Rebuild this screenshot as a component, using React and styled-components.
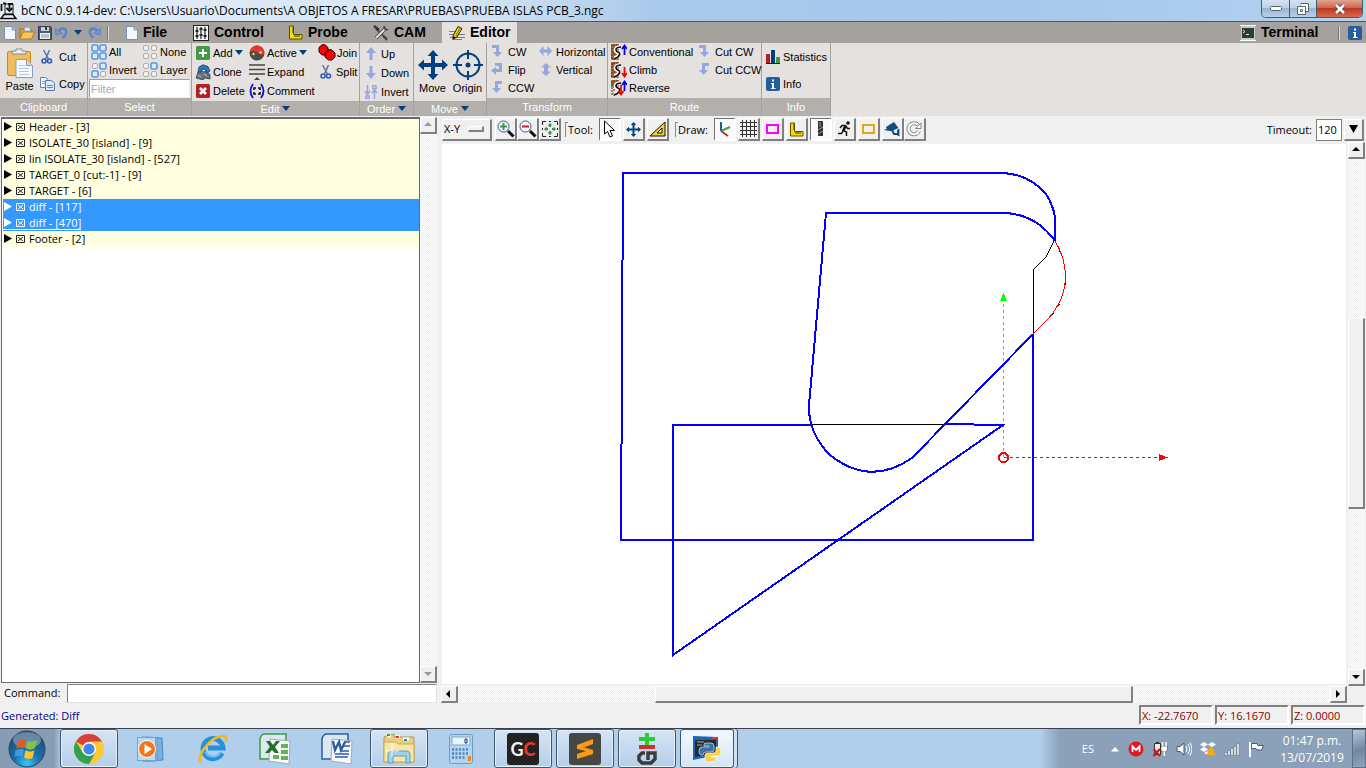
import React from "react";
import styled, { createGlobalStyle, css } from "styled-components";

const GlobalStyle = createGlobalStyle`
  *, *::before, *::after { box-sizing: border-box; }
  body { margin: 0; overflow: hidden; }
  button, input { font: inherit; color: inherit; margin: 0; }
  button { padding: 0; border: 0; background: none; cursor: pointer; }
  ul { list-style: none; margin: 0; padding: 0; }
  svg { display: block; flex: none; }
`;

const uiFont = '"Open Sans", "Noto Sans", sans-serif';
const ribbonFont = '"Liberation Sans", Arial, sans-serif';
const navy = "#00407f";
const lilac = "#97a6e0";

/* ---------- icons ---------- */

const Glyph = ({ w = 16, h = w, box, children }) => (
  <svg width={w} height={h} viewBox={box || `0 0 ${w} ${h}`} fill="none" aria-hidden="true">
    {children}
  </svg>
);

const Caret = () => <Glyph w={8} h={5}><path d="M0 0H8L4 5Z" fill={navy} /></Glyph>;

const PageIcon = () => (
  <Glyph w={12} h={14}>
    <path d="M.5.5H8L11.500 4V13.500H.5Z" fill="#f4f8ff" stroke="#7891b8" />
    <path d="M8 .5V4H11.500" fill="#b8cbe8" stroke="#7891b8" />
  </Glyph>
);
const OpenIcon = () => (
  <Glyph w={16} h={14}>
    <path d="M1 12V3H6L7 4H13V7" fill="#e0a030" stroke="#a87020" />
    <path d="M5 2L10 1L12 5H6Z" fill="#dfe9f8" stroke="#8898b8" strokeWidth=".6" />
    <path d="M1 13L4 6H15.500L12.500 13Z" fill="#f7c560" stroke="#b87c20" />
  </Glyph>
);
const SaveIcon = () => (
  <Glyph w={14}>
    <path d="M.5.5H12.500L13.500 2V13.500H.5Z" fill="#4c5a70" stroke="#333d50" />
    <rect x="3" y="1" width="8" height="4" fill="#c8d0dc" /><rect x="7" y="1" width="2" height="3" fill="#333d50" />
    <rect x="2" y="7" width="10" height="6" fill="#f0f2f6" /><path d="M3 9H11M3 11H11" stroke="#8896a8" />
  </Glyph>
);
const UndoIcon = ({ flip }) => (
  <Glyph w={13} h={13}>
    <g transform={flip ? "translate(13 0) scale(-1 1)" : undefined}>
      <path d="M4 5C6 1 12 2 11 7C10.500 9.500 9 11 7.500 12" stroke="#5a85cc" strokeWidth="2.600" />
      <path d="M0 2L1 9L7.500 7.500Z" fill="#6c96dc" stroke="#4a70b4" strokeWidth=".5" />
    </g>
  </Glyph>
);
const ControlIcon = () => (
  <Glyph w={16}>
    <rect x=".5" y=".5" width="15" height="15" fill="#f4f4f4" stroke="#222" />
    <path d="M4 2V14M8 2V14M12 2V14" stroke="#222" strokeWidth="1.200" />
    <path d="M2.500 6H5.500M6.500 10H9.500M10.500 5H13.500M2.500 11H5.500M6.500 4H9.500M10.500 11H13.500" stroke="#222" strokeWidth="1.800" />
  </Glyph>
);
const RulerIcon = () => (
  <Glyph w={15}>
    <path d="M1.500 1H5.500V9.500H14V14H1.500Z" fill="#f5dd00" stroke="#5c5200" />
    <path d="M4 3H5.500M4 5H5.500M4 7H5.500M7 10V12M9 10V12M11 10V12" stroke="#333" />
  </Glyph>
);
const ToolsIcon = () => (
  <Glyph w={16}>
    <path d="M3 4L14 14" stroke="#555" strokeWidth="2" /><path d="M1 1L6 5" stroke="#333" strokeWidth="2.600" />
    <path d="M13 3L3 13" stroke="#333" strokeWidth="3.400" /><path d="M13 3L3 13" stroke="#e4e4e4" strokeWidth="2" />
    <path d="M11 1L12 4L15 5M10 11L14 15" stroke="#444" strokeWidth="1.800" />
  </Glyph>
);
const PencilIcon = () => (
  <Glyph w={16}>
    <path d="M0 6.500H8M0 9.500H16M1 12.500H16M3 14.500H13" stroke="#777d90" />
    <path d="M4 11L9 1.500L13 3.500L8 12L4 14Z" fill="#f5d400" stroke="#222" />
    <path d="M4 11V14L7 12.500Z" fill="#111" /><path d="M11 3L7 11" stroke="#8a7200" />
  </Glyph>
);
const TerminalIcon = () => (
  <Glyph w={16}>
    <path d="M0 .5H16M0 15.500H16" stroke="#fff" /><rect x="1" y="1" width="14" height="14" fill="#c8ccc8" />
    <rect x="2" y="3" width="12" height="10" fill="#303a36" /><path d="M3 5L5 6.500L3 8M6 9.500H9" stroke="#e8e8e8" />
  </Glyph>
);
const InfoIcon = () => (
  <Glyph w={14}>
    <rect width="14" height="14" rx="2" fill="#245e9e" />
    <path d="M6 2.500H8V4.500H6ZM5 6H8V11H9.500V12H5V11H6V7H5Z" fill="#fff" />
  </Glyph>
);
const PasteIcon = () => (
  <Glyph w={26} h={30}>
    <rect x=".5" y="3.500" width="23" height="24" rx="1.500" fill="#f1bc5c" stroke="#c48a30" />
    <path d="M5 6V3H9V1H15V3H19V6Z" fill="#e8ebf0" stroke="#858c98" />
    <path d="M9 11.500H19.500L25.500 17.500V29.500H9Z" fill="#f6f9ff" stroke="#8c9cb8" />
    <path d="M19.500 11.500V17.500H25.500" fill="#ccd8ec" stroke="#8c9cb8" />
    <path d="M12 17.500H18M12 20.500H22M12 23.500H22M12 26.500H22" stroke="#b8c4dc" />
  </Glyph>
);
const CutIcon = () => (
  <Glyph w={12} h={14}>
    <path d="M2.500 0L7.500 9M8.500 0L4.500 9" stroke="#5876a8" strokeWidth="1.500" />
    <circle cx="3" cy="11" r="2" stroke="#3058c0" strokeWidth="1.600" /><circle cx="8.500" cy="11" r="2" stroke="#3058c0" strokeWidth="1.600" />
  </Glyph>
);
const CopyIcon = () => (
  <Glyph w={16} h={14}>
    <path d="M1.500.5H6.500L9.500 3V10.500H1.500Z" fill="#edf3ff" stroke="#6484b8" /><path d="M3 4.500H7M3 6.500H7" stroke="#86a2d0" />
    <path d="M6.500 3.500H12.500L15.500 6V13.500H6.500Z" fill="#dce8fc" stroke="#5878b0" /><path d="M8 8.500H14M8 10.500H14" stroke="#5e88c8" />
  </Glyph>
);
const SelectIcon = ({ on }) => (
  <Glyph w={16}>
    {[[1, 1], [9, 1], [1, 9], [9, 9]].map(([x, y], i) => (
      <rect key={i} x={x + (on[i] ? 0 : .5)} y={y + (on[i] ? 0 : .5)} width={on[i] ? 6 : 5} height={on[i] ? 6 : 5} rx="1.500"
        fill={on[i] ? "#dceafc" : "#f4f2f0"} stroke={on[i] ? "#5599e6" : "#b0acaa"} strokeWidth={on[i] ? 1.6 : 1} />
    ))}
  </Glyph>
);
const AddIcon = () => <Glyph w={14}><rect width="14" height="14" rx="1.500" fill="#459a48" /><path d="M7 3V11M3 7H11" stroke="#fff" strokeWidth="2" /></Glyph>;
const DeleteIcon = () => <Glyph w={14}><rect width="14" height="14" rx="1.500" fill="#b52025" /><path d="M4 4L10 10M10 4L4 10" stroke="#fff" strokeWidth="2.600" /></Glyph>;
const CloneIcon = () => (
  <Glyph w={16}>
    <path d="M1 14L3 8L6 6L9 8L12 7L15 11V15L10 14L8 16Z" fill="#69727c" stroke="#3a4048" strokeWidth=".8" />
    <path d="M3 8L4 3L8 .8L13 2.500L15 7L12 9L10 5.500L7 5L6 8Z" fill="#2878c4" stroke="#183c60" strokeWidth=".8" />
    <path d="M3 11L6 13M9 10L12 12" stroke="#b4bcc6" />
  </Glyph>
);
const ActiveIcon = () => (
  <Glyph w={16}>
    <circle cx="8" cy="8" r="7.500" fill="#4c4c4c" />
    <path d="M.5 8A7.500 7.500 0 0 1 15.500 8C13 12 10 8 8 7S2 5 .5 8" fill="#e03838" />
    <circle cx="4.500" cy="9" r="1.200" fill="#f3dc45" /><circle cx="11.500" cy="7.500" r="1.200" fill="#f3dc45" />
  </Glyph>
);
const ExpandIcon = () => <Glyph w={16}><path d="M0 1H16M0 5.500H16M0 10H16" stroke="#444" strokeWidth="1.500" /><path d="M5 16L8 13L11 16Z" fill="#444" /></Glyph>;
const CommentIcon = () => (
  <Glyph w={16}>
    <path d="M4 1Q-1 8 4 15M12 1Q17 8 12 15" stroke="#1010cc" strokeWidth="1.800" />
    <path d="M5 7V5H7M9 5H11V7M11 9V11H9M7 11H5V9" stroke="#111" strokeWidth="1.600" />
  </Glyph>
);
const JoinIcon = () => (
  <Glyph w={18} h={17}>
    <path d="M4 .8H7L10 3.500V8L7 11H4L1 8V3.500Z" fill="#f00" stroke="#200" />
    <path d="M10 5.800H13.500L17 9V13L14 16H10.500L7 13V9Z" fill="#f00" stroke="#200" /><path d="M7 9L10 6.500V8L7 11Z" stroke="#500" />
  </Glyph>
);
const arrowPaths = {
  up: <path d="M5.500 13V6H2L7 0L12 6H8.500V13Z" fill={lilac} />,
  down: <path d="M5.500 0V7H2L7 13L12 7H8.500V0Z" fill={lilac} />,
  invert: <path d="M3.500 0V8M1 6L3.500 9.500L6 6M10.500 14V6M8 8L10.500 5L13 8M9 .8H12V3.800H9ZM2 11H5V13.500H2Z" stroke={lilac} strokeWidth="1.500" />,
  cw: <path d="M1 0H8V7H11L6.500 12L2 7H5V3H1Z" fill={lilac} />,
  ccw: <path d="M11 0H4V7H1L5.500 12L10 7H7V3H11Z" fill={lilac} />,
  flip: <path d="M4 0H11V9H5V12L0 7.500L5 4V6H8V3H4Z" fill={lilac} />,
  horizontal: <path d="M0 6L4.500 1V4.500H8.500V1L13 6L8.500 11V7.500H4.500V11Z" fill={lilac} />,
  vertical: <path d="M7 0L12 4.500H9V8.500H12L7 13L2 8.500H5V4.500H2Z" fill={lilac} />,
};
const Arrow = ({ kind }) => <Glyph w={14}>{arrowPaths[kind]}</Glyph>;
const MoveIcon = ({ size = 30 }) => (
  <Glyph w={size} box="0 0 30 30">
    <path d="M15 0L20.500 6H17V13H24V9.500L30 15L24 20.500V17H17V24H20.500L15 30L9.500 24H13V17H6V20.500L0 15L6 9.500V13H13V6H9.500Z" fill={navy} />
  </Glyph>
);
const OriginIcon = () => (
  <Glyph w={30}>
    <circle cx="15" cy="15" r="11.500" stroke={navy} strokeWidth="2" /><circle cx="15" cy="15" r="2.500" fill={navy} />
    <path d="M15 0V9M15 21V30M0 15H9M21 15H30" stroke={navy} strokeWidth="2" />
  </Glyph>
);
const RouteIcon = ({ kind }) => (
  <Glyph w={16}>
    <rect x="0" y="0" width="8" height={kind === "reverse" ? 7 : 16} fill="#b06c3c" />
    <path d="M1 1V15M3 0V16M6 0V5" stroke="#4c2810" strokeDasharray="2 1" />
    <path d="M9 3C4 3 3 7 6 8S9 13 3 14" stroke="#fff" strokeWidth="3.500" />
    <path d="M10 3C4 3 4 7 7 8S9 13 3 15" stroke="#111" strokeWidth="1.700" />
    {kind === "climb"
      ? <path d="M13.500 5V14M11 11L13.500 14.500L16 11" stroke="#f00000" strokeWidth="1.700" />
      : <path d="M13.500 11V2M11 5L13.500 1.500L16 5" stroke="#0000e8" strokeWidth="1.700" />}
    {kind === "reverse" && <path d="M10 5V14M7.500 11L10 14.500L12.500 11" stroke="#f00000" strokeWidth="1.700" />}
  </Glyph>
);
const StatisticsIcon = () => (
  <Glyph w={14}><path d="M0 4H4V13H0Z" fill="#b52025" /><path d="M5 0H9V13H5Z" fill={navy} /><path d="M10 7H14V13H10Z" fill="#459a48" /><path d="M0 13.500H14" stroke="#222" /></Glyph>
);
const ZoomIcon = ({ minus }) => (
  <Glyph w={18}>
    <path d="M11 11L16.500 16.500" stroke="#111" strokeWidth="3" /><circle cx="6.500" cy="6.500" r="5.500" fill="#f6f8fa" stroke="#2c5c8c" />
    <path d={minus ? "M3 6.500H10" : "M3 6.500H10M6.500 3V10"} stroke={minus ? "#c02028" : "#3c9444"} strokeWidth="2" />
  </Glyph>
);
const FitIcon = () => (
  <Glyph w={18}>
    <path d="M1.500 5V1.500H5M8 1.500H10M13 1.500H16.500V5M16.500 8V10M16.500 13V16.500H13M10 16.500H8M5 16.500H1.500V13M1.500 10V8" stroke="#222" />
    <path d="M9 3L11.500 5.500H10V7H8V5.500H6.500ZM9 15L6.500 12.500H8V11H10V12.500H11.500ZM3 9L5.500 6.500V8H7V10H5.500V11.500ZM15 9L12.500 11.500V10H11V8H12.500V6.500Z" fill="#3c9444" />
  </Glyph>
);
const PointerIcon = () => <Glyph w={13} h={18}><path d="M1.500 1V14L4.500 11.500L7 17L9.500 16L7 10.500H11.500Z" fill="#fff" stroke="#000" /></Glyph>;
const TriangleIcon = () => <Glyph w={17} h={16}><path d="M1 15H16V1Z" fill="#f6d02c" stroke="#111" /><path d="M8 12H13V7Z" fill="#f0f0f0" stroke="#111" /></Glyph>;
const AxesIcon = () => <Glyph w={16}><path d="M5 1V10" stroke="#205c9c" strokeWidth="2" /><path d="M5 10L14 6" stroke="#449c4c" strokeWidth="2" /><path d="M5 10L12 15" stroke="#b83040" strokeWidth="2" /></Glyph>;
const GridIcon = () => <Glyph w={17} h={18}><path d="M0 2.500H17M0 6.500H17M0 10.500H17M0 14.500H17M2.500 0V17M6.500 0V17M10.500 0V17M14.500 0V17" stroke="#333" shapeRendering="crispEdges" /></Glyph>;
const FrameIcon = ({ color }) => <Glyph w={13} h={12}><rect x="1" y="2" width="11" height="8" fill="#f0f0f0" stroke={color} strokeWidth="2" /></Glyph>;
const DrillIcon = () => <Glyph w={5} h={16}><rect width="5" height="15" fill="#333" /><path d="M0 9L5 6M0 13L5 10M2 1V6" stroke="#999" /></Glyph>;
const RunIcon = () => <Glyph w={15} h={16}><circle cx="11" cy="2" r="1.800" fill="#111" /><path d="M3 7L5 4.500H8.500L10.500 7.500H13M8.500 5L6 9.500L9.500 11V15M6.500 9L4.500 12.500H1" stroke="#111" strokeWidth="1.500" /><path d="M8.500 4.500L6.500 9.500" stroke="#111" strokeWidth="2.500" /></Glyph>;
const CameraIcon = () => <Glyph w={16} h={16}><path d="M2 6L10 1L14.500 7L10 9L9 10.500L0 9L3 7.500Z" fill="#0e4b88" /><path d="M8 9L10 13H14V9M14.500 8V15" stroke="#0e4b88" strokeWidth="1.800" /></Glyph>;
const ReloadIcon = () => <Glyph w={16}><path d="M13 10A5.500 5.500 0 1 1 12 4" stroke="#888" strokeWidth="4" /><path d="M9.500 7.500H15V2Z" fill="#fafafa" stroke="#888" /><path d="M13 10A5.500 5.500 0 1 1 12 4" stroke="#fafafa" strokeWidth="2.200" /></Glyph>;
const AppIcon = () => (
  <Glyph w={18} h={20}>
    <path d="M5 4H13V14H5Z" fill="#e8eef5" stroke="#111" /><path d="M4 14.500H13L16 18.500H1Z" fill="#e8eef5" stroke="#111" strokeWidth="1.500" />
    <path d="M1.500 4V11M3 3.500H6M8 4H12V5M9.500 4V9M6.500 8L9.500 11L12.500 8" stroke="#111" strokeWidth="1.800" />
  </Glyph>
);

/* ---------- frame ---------- */

const Screen = styled.div`
  display: flex;
  flex-direction: column;
  height: 100vh;
  background: #f0f0f0;
  font: 11px/16px ${uiFont};
  color: #000;
`;

const TitleBar = styled.header`
  display: flex;
  align-items: flex-start;
  height: 22px;
  flex: none;
  border-bottom: 1px solid #47586c;
  background: linear-gradient(to right, #e4eef9 0%, #d4e3f4 35%, #a9c9ea 48%, #a6c8ea 75%, #b4d2f0 100%);
`;
const TitleText = styled.h1`
  flex: 1;
  margin: 0;
  padding-left: 3px;
  font: 12px/21px ${uiFont};
  white-space: nowrap;
`;
const WindowControls = styled.div`
  display: flex;
  margin-right: 3px;
  border: 1px solid #4a5a6e;
  border-top: 0;
  border-radius: 0 0 5px 5px;
  overflow: hidden;
`;
const WindowButton = styled.button`
  display: grid;
  place-items: center;
  width: ${(p) => (p.$close ? 46 : 27)}px;
  height: 17px;
  background: ${(p) => (p.$close
    ? "linear-gradient(#e0a493, #d0664f 45%, #bd3a20 50%, #d8694a)"
    : "linear-gradient(#d4e2f1, #bfd2e6 45%, #9db6d0 50%, #b8cfe6)")};
  & + & { border-left: 1px solid #4a5a6e; }
`;

const TabBar = styled.nav`
  display: flex;
  align-items: stretch;
  height: 21px;
  flex: none;
  background: #a5a19d;
  font: bold 14px/21px ${ribbonFont};
`;
const QuickTools = styled.div`
  display: flex;
  align-items: center;
  gap: 3px;
  width: 119px;
  padding-left: 4px;
`;
const HistoryButton = styled.button`padding: 0 3px;`;
const Divider = styled.span`
  width: 2px;
  height: 14px;
  margin: 4px ${(p) => p.$gap}px;
  border-left: 1px solid #777;
  border-right: 1px solid #ddd;
`;
const Tab = styled.button`
  display: flex;
  align-items: center;
  gap: 5px;
  padding: 0 7px;
  width: ${(p) => p.$width}px;
  background: ${(p) => (p.$active ? "#e5e1de" : "transparent")};
`;
const Spacer = styled.span`flex: 1;`;
const QuickInfo = styled.button`padding: 0 4px 0 0;`;

/* ---------- ribbon ---------- */

const Ribbon = styled.section`
  display: flex;
  height: 73px;
  flex: none;
  background: #e5e1de;
  font: 11px/14px ${ribbonFont};
`;
const Group = styled.div`
  display: flex;
  flex-direction: column;
  width: ${(p) => p.$width}px;
  border-right: 1px solid #a5a19d;
`;
const GroupBody = styled.div`
  flex: 1;
  min-height: 0;
  display: grid;
  grid-template-columns: ${(p) => p.$cols};
  grid-auto-rows: ${(p) => p.$row || 18}px;
  align-content: start;
  padding-left: ${(p) => p.$pad || 3}px;
  padding-top: ${(p) => p.$top || 0}px;
`;
const GroupLabel = styled.div`
  display: flex;
  align-items: center;
  justify-content: center;
  gap: 3px;
  height: ${(p) => (p.$menu ? 15 : 18)}px;
  background: #b3afab;
  color: #fff;
`;
const Tool = styled.button`
  display: flex;
  align-items: center;
  gap: ${(p) => p.$gap || 3}px;
  white-space: nowrap;
  text-align: left;
`;
const BigTool = styled.button`
  display: flex;
  flex-direction: column;
  align-items: center;
  justify-content: flex-start;
  gap: 1px;
  padding-top: 5px;
  grid-row: span 2;
`;
const FilterInput = styled.input`
  grid-column: 1 / -1;
  height: 19px;
  margin: 0 1px 0 -2px;
  padding: 0 1px;
  min-width: 0;
  border: 1px solid #a0a0a0;
  border-right-color: #eee;
  border-bottom-color: #eee;
  background: #fff;
  &::placeholder { color: #aaa; opacity: 1; }
`;
const IconSlot = styled.span`
  display: grid;
  place-items: center;
  width: ${(p) => p.$w || 16}px;
  flex: none;
`;

const ToolItem = ({ icon, label, menu, slot, gap }) => (
  <Tool $gap={gap}><IconSlot $w={slot}>{icon}</IconSlot>{label}{menu && <Caret />}</Tool>
);
const RibbonGroup = ({ label, width, menu, children, ...body }) => (
  <Group $width={width}>
    <GroupBody {...body}>{children}</GroupBody>
    <GroupLabel $menu={menu}>{label}{menu && <Caret />}</GroupLabel>
  </Group>
);

/* ---------- workspace ---------- */

const Workspace = styled.main`
  display: flex;
  flex: 1;
  min-height: 0;
`;
const SidePane = styled.aside`
  display: flex;
  flex-direction: column;
  width: 437px;
  margin-right: 4px;
  flex: none;
  padding: 1px 0 0 1px;
`;
const ListFrame = styled.div`
  display: flex;
  flex: 1;
  min-height: 0;
`;
const BlockList = styled.ul`
  flex: 1;
  padding-left: 1px;
  background: #fff;
  border: 1px solid #696969;
  border-top-width: 2px;
`;
const Block = styled.li`
  display: flex;
  align-items: center;
  height: 16px;
  white-space: pre;
  background: ${(p) => (p.$selected ? "#3399ff" : "#ffffe0")};
  color: ${(p) => (p.$selected ? "#fff" : "#000")};
`;
const BlockLine = styled.span`
  display: flex;
  align-items: center;
  height: 14px;
  gap: 4px;
  padding-left: 1px;
  border-bottom: 1px solid ${(p) => (p.$focus ? "#fff" : "transparent")};
`;
const CommandRow = styled.label`
  display: flex;
  align-items: center;
  height: 20px;
  padding-left: 3px;
  gap: 7px;
`;
const CommandInput = styled.input`
  flex: 1;
  height: 19px;
  border: 1px solid #828282;
  border-right-color: #e3e3e3;
  border-bottom-color: #e3e3e3;
  background: #fff;
`;

const raised = css`
  background: #f0f0f0;
  border: 1px solid #fff;
  border-right: 2px solid #808080;
  border-bottom: 2px solid #808080;
`;
const Scrollbar = styled.div`
  display: flex;
  flex-direction: ${(p) => (p.$horizontal ? "row" : "column")};
  ${(p) => (p.$horizontal ? "height: 17px;" : "width: 17px;")}
  background: repeating-conic-gradient(#fff 0 25%, #ececec 0 50%) 0 0 / 2px 2px;
`;
const ScrollButton = styled.button`
  display: grid;
  place-items: center;
  width: 17px;
  height: 17px;
  flex: none;
  ${raised}
`;
const Track = styled.span`flex: ${(p) => p.$share};`;
const Thumb = styled.span`
  flex: ${(p) => p.$share};
  ${raised}
`;

const CanvasPane = styled.section`
  display: flex;
  flex-direction: column;
  flex: 1;
  min-width: 0;
`;
const CanvasTools = styled.div`
  display: flex;
  align-items: center;
  height: 26px;
  flex: none;
  padding: 1px 2px 0 1px;
`;
const PlaneButton = styled.button`
  display: flex;
  align-items: center;
  justify-content: space-between;
  width: 50px;
  height: 22px;
  margin-right: 3px;
  padding: 0 6px 0 1px;
  ${raised}
`;
const PlaneMark = styled.span`
  width: 16px;
  height: 6px;
  ${raised}
`;
const CanvasButton = styled.button`
  display: grid;
  place-items: center;
  width: 22px;
  height: 23px;
  margin-right: ${(p) => (p.$tight ? 0 : 2)}px;
  ${raised}
  ${(p) => p.$on && css`
    background: #fafafa;
    border-color: #707070 #fff #fff #707070;
  `}
`;
const ToolCaption = styled.span`
  display: flex;
  align-items: center;
  margin: 0 6px 0 4px;
  &::before {
    content: "";
    width: 3px;
    height: 15px;
    border: 1px solid #888;
    border-right: 0;
    border-bottom: 0;
  }
`;
const TimeoutField = styled.label`
  display: flex;
  align-items: center;
  gap: 4px;
`;
const TimeoutInput = styled.input`
  width: 26px;
  height: 22px;
  padding: 0 1px;
  border: 1px solid #808080;
  background: #fff;
`;
const DropButton = styled.button`
  display: grid;
  place-items: center;
  width: 20px;
  height: 22px;
  margin-left: 2px;
  ${raised}
`;
const CanvasBody = styled.div`
  display: flex;
  flex: 1;
  min-height: 0;
`;
const Sheet = styled.div`
  display: flex;
  flex: 1;
  min-width: 0;
  padding: 2px 0 2px 1px;
`;
const Drawing = styled.svg`
  flex: 1;
  min-width: 0;
  height: 100%;
  background: #fff;
`;
const VerticalGutter = styled.div`
  display: flex;
  padding: 0 1px 0 2px;
`;
const HorizontalGutter = styled.div`
  padding-right: 19px;
`;

/* ---------- status bar ---------- */

const StatusBar = styled.footer`
  display: flex;
  align-items: center;
  gap: 2px;
  height: 25px;
  flex: none;
  padding: 0 1px;
  color: #00008b;
`;
const Coordinate = styled.output`
  width: 74px;
  height: 20px;
  margin-bottom: 2px;
  padding: 0 1px;
  line-height: 17px;
  border: 2px solid;
  border-color: #808080 #fff #fff #808080;
  color: #8b0000;
`;

/* ---------- taskbar ---------- */

const Taskbar = styled.nav`
  display: flex;
  align-items: stretch;
  height: 40px;
  flex: none;
  border-top: 1px solid #354050;
  background: linear-gradient(to right, #879db5 0, #879db5 54px, #b1ceeb 62px, #b1ceeb calc(100% - 326px), #8aa1b9 calc(100% - 306px));
`;
const StartButton = styled.button`
  display: grid;
  place-items: center;
  width: 60px;
  padding-right: 6px;
`;
const TaskButton = styled.button`
  display: grid;
  place-items: center;
  width: ${(p) => (p.$front ? 54 : 58)}px;
  margin-right: 4px;
  border: 1px solid transparent;
  border-radius: 3px;
  ${(p) => p.$open && css`
    border-color: #40566e;
    box-shadow: inset 0 0 0 1px #e6f1fc;
    background: linear-gradient(${p.$front ? "#f4f9fe, #d4e5f6" : "#d5e4f4, #b4cfea"});
  `}
  ${(p) => p.$front && css`
    box-shadow: inset 0 0 0 1px #e6f1fc, 3px 0 0 #cfe1f3, 4px 0 0 #40566e;
  `}
`;
const Tray = styled.div`
  display: flex;
  align-items: center;
  gap: 8px;
  color: #fff;
`;
const Language = styled.span`margin-right: 8px;`;
const Clock = styled.time`
  width: 80px;
  text-align: center;
  font: 12px/17px ${uiFont};
`;
const ShowDesktop = styled.button`
  width: 14px;
  align-self: stretch;
  border: 1px solid #5c7088;
  background: linear-gradient(160deg, #b8c8d8, #6f88a2 55%, #90a6bc);
`;

const StartOrb = () => (
  <Glyph w={38}>
    <defs><radialGradient id="orb" cx=".5" cy=".9" r=".9"><stop offset="0" stopColor="#35c8f4" /><stop offset=".4" stopColor="#1770b0" /><stop offset="1" stopColor="#25445f" /></radialGradient></defs>
    <circle cx="19" cy="19" r="18" fill="url(#orb)" stroke="#2b4660" /><ellipse cx="19" cy="10" rx="14" ry="8" fill="#a9c4d8" opacity=".5" />
    <path d="M10 11Q14 8 18 10L16.500 18Q12 16 8 19Z" fill="#e85a24" /><path d="M19.500 11Q24 13 29 10L27 18Q22 21 18 18.500Z" fill="#86c43c" />
    <path d="M7.500 20.500Q12 17.500 16 19.500L14.500 27Q10 25 6.500 27Z" fill="#3f9cdc" /><path d="M17.500 20Q22 23 26.500 20L24.500 28Q20 30 16 27.500Z" fill="#fcc42c" />
  </Glyph>
);
const ChromeLogo = () => (
  <Glyph w={30}>
    <circle cx="15" cy="15" r="15" fill="#fcc934" /><path d="M15 15L2 7.500A15 15 0 0 1 28 7.500H15Z" fill="#d8403a" />
    <path d="M2 7.500A15 15 0 0 0 15 30L21.500 18.500L15 15L8.500 18.500Z" fill="#35a04f" /><circle cx="15" cy="15" r="7" fill="#fff" /><circle cx="15" cy="15" r="5.600" fill="#4285f4" />
  </Glyph>
);
const PlayerLogo = () => (
  <Glyph w={28}>
    <path d="M9 2L25 3L26 25L9 26Z" fill="#79b0dc" stroke="#4e88bc" /><path d="M5 2L20 3V26H5Z" fill="#9ccaee" stroke="#5b98c8" /><rect x=".5" y="2.500" width="18" height="23" fill="#b8dcf4" stroke="#6ca4cc" />
    <circle cx="10" cy="14" r="8.500" fill="#f4761c" stroke="#fff" /><path d="M7.500 9V19L15 14Z" fill="#fff" />
  </Glyph>
);
const ExplorerLogo = () => (
  <Glyph w={32}>
    <path d="M25 20A10 10 0 1 1 26 15H11" stroke="#2590dc" strokeWidth="5" /><path d="M24 19A9 9 0 0 1 8 19" stroke="#6cc6f6" strokeWidth="1.500" />
    <path d="M4 29C-2 24 14 3 26 3C30 3 30 6 28 9" stroke="#f4b820" strokeWidth="2.600" />
  </Glyph>
);
const OfficeLogo = ({ excel }) => {
  const c = excel ? "#3c9c40" : "#2c5ca8";
  return (
    <Glyph w={32}>
      <path d="M6 1H27V26H1V6Q2 1 6 1Z" fill="#dce8f0" stroke={c} strokeWidth="1.500" />
      <path d="M11 6L31 8L30 31L10 28Z" fill="#f8fafa" stroke="#a0acb8" />
      {excel
        ? <><path d="M22 11H29V15H22ZM22 17H29V21H22ZM22 23H29V27H22ZM14 22H20V26H14Z" fill="#67b057" /><path d="M7 8H11L14 12L17 8H21L16 14L20 20H16L13 17L10 20H6L11 14Z" fill="#22702a" /></>
        : <><path d="M12 8L14 17L18 9L20 17L24 9" stroke={c} strokeWidth="2.400" /><path d="M23 9H29M23 13H29M19 18H28M14 21H28M14 24H27" stroke={c} strokeWidth="1.500" /></>}
    </Glyph>
  );
};
const FoldersLogo = () => (
  <Glyph w={34} h={32}>
    <path d="M2 4L12 1V4H32V29H2Z" fill="#e9cf7c" stroke="#b39646" /><path d="M5 3H9M14 4H18M21 6H27" stroke="#fff" strokeWidth="3" />
    <path d="M5 2H8" stroke="#34a444" strokeWidth="2" /><path d="M14 4H17" stroke="#d83830" strokeWidth="2" /><path d="M22 7H25" stroke="#2880d0" strokeWidth="2" />
    <path d="M2 9H14L16 11H32V29H2Z" fill="#f8e7a4" stroke="#c8aa58" /><path d="M6 30V21Q6 18 10 18H24Q28 18 28 21V30H24V23H11V30Z" fill="#9fd2ec" stroke="#5c9cc0" />
    <path d="M10 10V24M4 18H17" stroke="#fff" opacity=".8" />
  </Glyph>
);
const CalculatorLogo = () => (
  <Glyph w={24} h={30}>
    <rect x=".5" y=".5" width="23" height="29" rx="2" fill="#b4d4ec" stroke="#6c9cc4" /><rect x="3" y="3" width="18" height="8" fill="#e8f4fc" stroke="#7ca8cc" />
    <path d="M16 5H18V9H16Z" stroke="#1c4064" />
    <path d="M3 15.500H20M3 19.500H20M3 23.500H17" stroke="#4c84bc" strokeWidth="2.400" strokeDasharray="2 1.500" /><path d="M19 22H22V27H19Z" fill="#f08428" />
  </Glyph>
);
const Badge = styled.span`
  display: grid;
  place-items: center;
  width: 32px;
  height: 32px;
  border-radius: 3px;
  background: ${(p) => (p.$checked ? "repeating-conic-gradient(#1b1b1b 0 25%, #292929 0 50%) 0 0 / 4px 4px" : "#474747")};
  color: #f2f2f2;
  font: bold 18px/32px Lato, sans-serif;
`;
const BadgeText = styled.span`b { color: #e23a2c; }`;
const SublimeMark = () => <Glyph w={18} h={20}><path d="M1 6L17 0V5L8 8.500L17 11V15L1 20V15L10 12L1 10Z" fill="#ff9a0c" /></Glyph>;
const GPlusLogo = () => (
  <Glyph w={20} h={32}>
    <path d="M10 0V12M2 6H18" stroke="#2ecc33" strokeWidth="4" /><path d="M2 14H18" stroke="#cc3030" strokeWidth="4" />
    <path d="M8 20H5L2 23V27L5 30H14L18 26V20H11V27" stroke="#3c3c3c" strokeWidth="3.500" />
  </Glyph>
);
const PythonLogo = () => (
  <Glyph w={30} h={28}>
    <path d="M1 1L26 2V20L1 25Z" fill="#1c64b4" /><path d="M20 2H25V4H20Z" fill="#d83c30" /><path d="M3 5L24 5V18L3 22Z" fill="#222c34" /><path d="M5 7H12M5 10H10" stroke="#aaa" />
    <path d="M13 8H19Q22 8 22 11V15Q22 17 19 17H14Q11 17 11 20H9Q7 20 7 16T10 12H17V11H12V9Z" fill="#3474ac" stroke="#fff" strokeWidth=".6" />
    <path d="M24 12H26Q29 13 29 17T26 21H19V22H24V24Q23 27 18 27T13 24V20Q13 18 16 18H21Q24 18 24 15Z" fill="#fdd040" stroke="#fff" strokeWidth=".6" />
  </Glyph>
);

const taskItems = [
  { name: "Chrome", icon: <ChromeLogo />, open: true },
  { name: "Media Player", icon: <PlayerLogo /> },
  { name: "Internet Explorer", icon: <ExplorerLogo /> },
  { name: "Excel", icon: <OfficeLogo excel /> },
  { name: "Word", icon: <OfficeLogo /> },
  { name: "Files", icon: <FoldersLogo />, open: true },
  { name: "Calculator", icon: <CalculatorLogo /> },
  { name: "GC", icon: <Badge $checked><BadgeText>G<b>C</b></BadgeText></Badge>, open: true },
  { name: "Sublime Text", icon: <Badge><SublimeMark /></Badge>, open: true },
  { name: "G-code tool", icon: <GPlusLogo />, open: true },
  { name: "Python", icon: <PythonLogo />, open: true, front: true },
];

const blocks = [
  { label: "Header - [3]" },
  { label: "ISOLATE_30 [island] - [9]" },
  { label: "lin ISOLATE_30 [island] - [527]" },
  { label: "TARGET_0 [cut:-1] - [9]" },
  { label: "TARGET - [6]" },
  { label: "diff - [117]", selected: true },
  { label: "diff - [470]", selected: true, focus: true },
  { label: "Footer - [2]" },
];

const Point = ({ dir, color = "#000" }) => {
  const shapes = { up: "M0 5L4 1L8 5Z", down: "M0 2L4 6L8 2Z", left: "M5 0L1 4L5 8Z", right: "M2 0L6 4L2 8Z" };
  return <Glyph w={8}><path d={shapes[dir]} fill={color} /></Glyph>;
};

const ToolpathDrawing = () => (
  <Drawing viewBox="442 144 904 540" preserveAspectRatio="xMidYMid meet" fill="none" shapeRendering="crispEdges" role="img" aria-label="Toolpaths">
    <path d="M1003.500 457V300" stroke="#00ff00" strokeDasharray="3 3" />
    <path d="M1000 301L1003.500 293L1007 301Z" fill="#00ff00" />
    <path d="M1004 457.500H1160" stroke="#ff0000" strokeDasharray="3 3" />
    <path d="M1159 454L1168 457.500L1159 461Z" fill="#ff0000" />
    <path d="M1054 241L1046 257L1033.500 269.500V334M811 424.500H945" stroke="#000" />
    <path d="M1055 241L1062 256L1065.500 272V283L1060 303L1052 315L1033 334" stroke="#000" strokeDasharray="2 9" />
    <path d="M1055 241Q1065 257 1065.500 277Q1065 300 1048 319L1033 334" stroke="#ff0000" />
    <g stroke="#0000ff" strokeWidth="2">
      <path d="M1055 241V217Q1053 205 1046 194Q1028 173 1000 173H623L621 540H1033V334" />
      <path d="M1055 241Q1035 213 1002 213H826L809 405Q808 433 830 455Q870 487 912 458L1033 334" />
      <path d="M811 425H673V655L1003 425L944 424" />
    </g>
    <circle cx="1003.500" cy="457.500" r="4.500" stroke="#ff0000" strokeWidth="2" />
  </Drawing>
);

export default function App() {
  return (
    <Screen>
      <GlobalStyle />
      <TitleBar>
        <AppIcon />
        <TitleText>bCNC 0.9.14-dev: C:\Users\Usuario\Documents\A OBJETOS A FRESAR\PRUEBAS\PRUEBA ISLAS PCB_3.ngc</TitleText>
        <WindowControls>
          <WindowButton aria-label="Minimize"><Glyph w={12} h={5}><rect x=".5" y=".5" width="11" height="4" rx="1" fill="#fff" stroke="#566" /></Glyph></WindowButton>
          <WindowButton aria-label="Restore"><Glyph w={12} h={12}><path d="M3.500.5H11.500V8.500H9M.5 3.500H8.500V11.500H.5ZM3.500 6.500H5.500V8.500H3.500Z" fill="#fff" stroke="#566" /></Glyph></WindowButton>
          <WindowButton $close aria-label="Close"><Glyph w={12} h={10}><path d="M2 1L10 9M10 1L2 9" stroke="#544" strokeWidth="4.500" /><path d="M2 1L10 9M10 1L2 9" stroke="#fff" strokeWidth="2.600" /></Glyph></WindowButton>
        </WindowControls>
      </TitleBar>

      <TabBar>
        <QuickTools>
          <button aria-label="New"><PageIcon /></button>
          <button aria-label="Open"><OpenIcon /></button>
          <button aria-label="Save"><SaveIcon /></button>
          <button aria-label="Undo"><UndoIcon /></button>
          <HistoryButton aria-label="Undo history"><Caret /></HistoryButton>
          <button aria-label="Redo"><UndoIcon flip /></button>
          <Divider $gap={3} />
        </QuickTools>
        <Tab $width={67}><PageIcon />File</Tab>
        <Tab $width={95}><ControlIcon />Control</Tab>
        <Tab $width={85}><RulerIcon />Probe</Tab>
        <Tab $width={76}><ToolsIcon />CAM</Tab>
        <Tab $width={75} $active><PencilIcon />Editor</Tab>
        <Spacer />
        <Tab $width={97}><TerminalIcon />Terminal</Tab>
        <Divider $gap={8} />
        <QuickInfo aria-label="Information"><InfoIcon /></QuickInfo>
      </TabBar>

      <Ribbon>
        <RibbonGroup label="Clipboard" width={88} $cols="37px 1fr" $row={27} $pad={1}>
          <BigTool><PasteIcon />Paste</BigTool>
          <ToolItem slot={18} icon={<CutIcon />} label="Cut" />
          <ToolItem slot={18} icon={<CopyIcon />} label="Copy" />
        </RibbonGroup>
        <RibbonGroup label="Select" width={104} $cols="51px 1fr">
          <ToolItem icon={<SelectIcon on={[1, 1, 1, 1]} />} label="All" gap={2} />
          <ToolItem icon={<SelectIcon on={[0, 0, 0, 0]} />} label="None" gap={2} />
          <ToolItem icon={<SelectIcon on={[0, 1, 1, 0]} />} label="Invert" gap={2} />
          <ToolItem icon={<SelectIcon on={[0, 1, 0, 0]} />} label="Layer" gap={2} />
          <FilterInput placeholder="Filter" aria-label="Filter" />
        </RibbonGroup>
        <RibbonGroup label="Edit" width={168} menu $cols="54px 69px 1fr" $row={19}>
          <ToolItem icon={<AddIcon />} label="Add" menu gap={2} />
          <ToolItem icon={<ActiveIcon />} label="Active" menu gap={2} />
          <ToolItem slot={18} gap={1} icon={<JoinIcon />} label="Join" />
          <ToolItem icon={<CloneIcon />} label="Clone" gap={2} />
          <ToolItem icon={<ExpandIcon />} label="Expand" gap={2} />
          <ToolItem gap={2} icon={<CutIcon />} label="Split" />
          <ToolItem icon={<DeleteIcon />} label="Delete" gap={2} />
          <ToolItem icon={<CommentIcon />} label="Comment" gap={2} />
        </RibbonGroup>
        <RibbonGroup label="Order" width={54} menu $cols="1fr" $row={19} $top={1}>
          <ToolItem icon={<Arrow kind="up" />} label="Up" gap={2} />
          <ToolItem icon={<Arrow kind="down" />} label="Down" gap={2} />
          <ToolItem icon={<Arrow kind="invert" />} label="Invert" gap={2} />
        </RibbonGroup>
        <RibbonGroup label="Move" width={73} menu $cols="35px 35px" $row={27} $pad={1} $top={2}>
          <BigTool><MoveIcon />Move</BigTool>
          <BigTool><OriginIcon />Origin</BigTool>
        </RibbonGroup>
        <RibbonGroup label="Transform" width={121} $cols="48px 1fr">
          <ToolItem icon={<Arrow kind="cw" />} label="CW" gap={2} />
          <ToolItem icon={<Arrow kind="horizontal" />} label="Horizontal" gap={2} />
          <ToolItem icon={<Arrow kind="flip" />} label="Flip" gap={2} />
          <ToolItem icon={<Arrow kind="vertical" />} label="Vertical" gap={2} />
          <ToolItem icon={<Arrow kind="ccw" />} label="CCW" gap={2} />
        </RibbonGroup>
        <RibbonGroup label="Route" width={154} $cols="86px 1fr">
          <ToolItem icon={<RouteIcon kind="conventional" />} label="Conventional" gap={2} />
          <ToolItem icon={<Arrow kind="cw" />} label="Cut CW" gap={2} />
          <ToolItem icon={<RouteIcon kind="climb" />} label="Climb" gap={2} />
          <ToolItem icon={<Arrow kind="ccw" />} label="Cut CCW" gap={2} />
          <ToolItem icon={<RouteIcon kind="reverse" />} label="Reverse" gap={2} />
        </RibbonGroup>
        <RibbonGroup label="Info" width={69} $cols="1fr" $row={27}>
          <ToolItem icon={<StatisticsIcon />} label="Statistics" gap={2} />
          <ToolItem icon={<InfoIcon />} label="Info" gap={2} />
        </RibbonGroup>
      </Ribbon>

      <Workspace>
        <SidePane>
          <ListFrame>
            <BlockList>
              {blocks.map((b) => (
                <Block key={b.label} $selected={b.selected}>
                  <BlockLine $focus={b.focus}>
                    <Glyph w={8} h={9}><path d="M0 0V9L8 4.500Z" fill={b.selected ? "#fff" : "#000"} /></Glyph>
                    <Glyph w={9} h={9}><path d="M.5 1.500H8.500V8.500H.5ZM2 3L7 7M7 3L2 7" stroke={b.selected ? "#fff" : "#222"} /></Glyph>
                    {b.label}
                  </BlockLine>
                </Block>
              ))}
            </BlockList>
            <Scrollbar>
              <ScrollButton aria-label="Scroll list up"><Point dir="up" color="#999" /></ScrollButton>
              <Track $share={1} />
              <ScrollButton aria-label="Scroll list down"><Point dir="down" color="#999" /></ScrollButton>
            </Scrollbar>
          </ListFrame>
          <CommandRow>Command:<CommandInput /></CommandRow>
        </SidePane>

        <CanvasPane>
          <CanvasTools>
            <PlaneButton>X-Y<PlaneMark /></PlaneButton>
            <CanvasButton $tight aria-label="Zoom in"><ZoomIcon /></CanvasButton>
            <CanvasButton $tight aria-label="Zoom out"><ZoomIcon minus /></CanvasButton>
            <CanvasButton $tight aria-label="Fit to screen"><FitIcon /></CanvasButton>
            <ToolCaption>Tool:</ToolCaption>
            <CanvasButton $on aria-label="Select"><PointerIcon /></CanvasButton>
            <CanvasButton aria-label="Pan"><MoveIcon size={15} /></CanvasButton>
            <CanvasButton aria-label="Measure"><TriangleIcon /></CanvasButton>
            <ToolCaption>Draw:</ToolCaption>
            <CanvasButton $on aria-label="Axes"><AxesIcon /></CanvasButton>
            <CanvasButton aria-label="Grid"><GridIcon /></CanvasButton>
            <CanvasButton aria-label="Margins"><FrameIcon color="#ff00ff" /></CanvasButton>
            <CanvasButton aria-label="Probe"><RulerIcon /></CanvasButton>
            <CanvasButton $on aria-label="Paths"><DrillIcon /></CanvasButton>
            <CanvasButton aria-label="Rapid moves"><RunIcon /></CanvasButton>
            <CanvasButton aria-label="Work area"><FrameIcon color="#d8ac18" /></CanvasButton>
            <CanvasButton $tight aria-label="Camera"><CameraIcon /></CanvasButton>
            <CanvasButton $tight aria-label="Refresh"><ReloadIcon /></CanvasButton>
            <Spacer />
            <TimeoutField>Timeout:<TimeoutInput defaultValue="120" /></TimeoutField>
            <DropButton aria-label="Timeout values"><Glyph w={9} h={8}><path d="M0 0H9L4.500 8Z" fill="#000" /></Glyph></DropButton>
          </CanvasTools>
          <CanvasBody>
            <Sheet><ToolpathDrawing /></Sheet>
            <VerticalGutter>
              <Scrollbar>
                <ScrollButton aria-label="Scroll up"><Point dir="up" /></ScrollButton>
                <Track $share={160} />
                <Thumb $share={189} />
                <Track $share={161} />
                <ScrollButton aria-label="Scroll down"><Point dir="down" /></ScrollButton>
              </Scrollbar>
            </VerticalGutter>
          </CanvasBody>
          <HorizontalGutter>
            <Scrollbar $horizontal>
              <ScrollButton aria-label="Scroll left"><Point dir="left" /></ScrollButton>
              <Track $share={198} />
              <Thumb $share={478} />
              <Track $share={198} />
              <ScrollButton aria-label="Scroll right"><Point dir="right" /></ScrollButton>
            </Scrollbar>
          </HorizontalGutter>
        </CanvasPane>
      </Workspace>

      <StatusBar>
        Generated: Diff
        <Spacer />
        <Coordinate>X: -22.7670</Coordinate>
        <Coordinate>Y: 16.1670</Coordinate>
        <Coordinate>Z: 0.0000</Coordinate>
      </StatusBar>

      <Taskbar>
        <StartButton aria-label="Start"><StartOrb /></StartButton>
        {taskItems.map((t) => (
          <TaskButton key={t.name} aria-label={t.name} $open={t.open} $front={t.front}>{t.icon}</TaskButton>
        ))}
        <Spacer />
        <Tray>
          <Language>ES</Language>
          <Glyph w={10} h={6}><path d="M1 5.500L5 1L9 5.500Z" fill="#fff" /></Glyph>
          <Glyph w={16}><circle cx="8" cy="8" r="7.500" fill="#e01820" /><path d="M4.500 11V5.500L8 9L11.500 5.500V11" stroke="#fff" strokeWidth="1.800" /></Glyph>
          <Glyph w={16}>
            <path d="M2.500 2.500H8.500V13.500H2.500ZM4 1.500H7" fill="#e8edf2" stroke="#333" />
            <path d="M9 5H15.500V9L13.500 11H11L9 9Z" fill="#fff" stroke="#444" strokeWidth=".6" /><path d="M10.500 1V5M14 1V5M12.300 11V15" stroke="#fff" strokeWidth="1.500" />
            <path d="M1.500 8L8 15M8 8L1.500 15" stroke="#e01010" strokeWidth="2.200" />
          </Glyph>
          <Glyph w={16}><path d="M1 5.500H4L8 2V14L4 10.500H1Z" fill="#f4f6f8" stroke="#4c5c6c" /><path d="M10 5Q12 8 10 11M12 3Q15.500 8 12 13M14 1.500Q18 8 14 14.500" stroke="#fff" /></Glyph>
          <Glyph w={16}><path d="M4 1L8 3.500L4 6L0 3.500ZM12 1L16 3.500L12 6L8 3.500ZM4 6L8 8.500L4 11L0 8.500ZM4 12L8 10V14Z" fill="#fff" /><path d="M6 14Q8 12 8 9Q11 4 14 9Q14 12 16 14Z" fill="#f4a81c" /></Glyph>
          <Glyph w={16}><path d="M1 11.500H3V14.500H1ZM4 9.500H6V14.500H4ZM7 7.500H9V14.500H7ZM10 5.500H12V14.500H10ZM13 2.500H15V14.500H13Z" fill="#fff" stroke="#50657c" strokeWidth=".5" /></Glyph>
          <Glyph w={16}><path d="M2 1V16" stroke="#fff" strokeWidth="2" /><path d="M3.500 2.500H9L10 4.500H15.500L13.500 9H9L8 7.500H3.500Z" fill="#fff" stroke="#465a70" /></Glyph>
          <Clock>01:47 p.m.<br />13/07/2019</Clock>
        </Tray>
        <ShowDesktop aria-label="Show desktop" />
      </Taskbar>
    </Screen>
  );
}
